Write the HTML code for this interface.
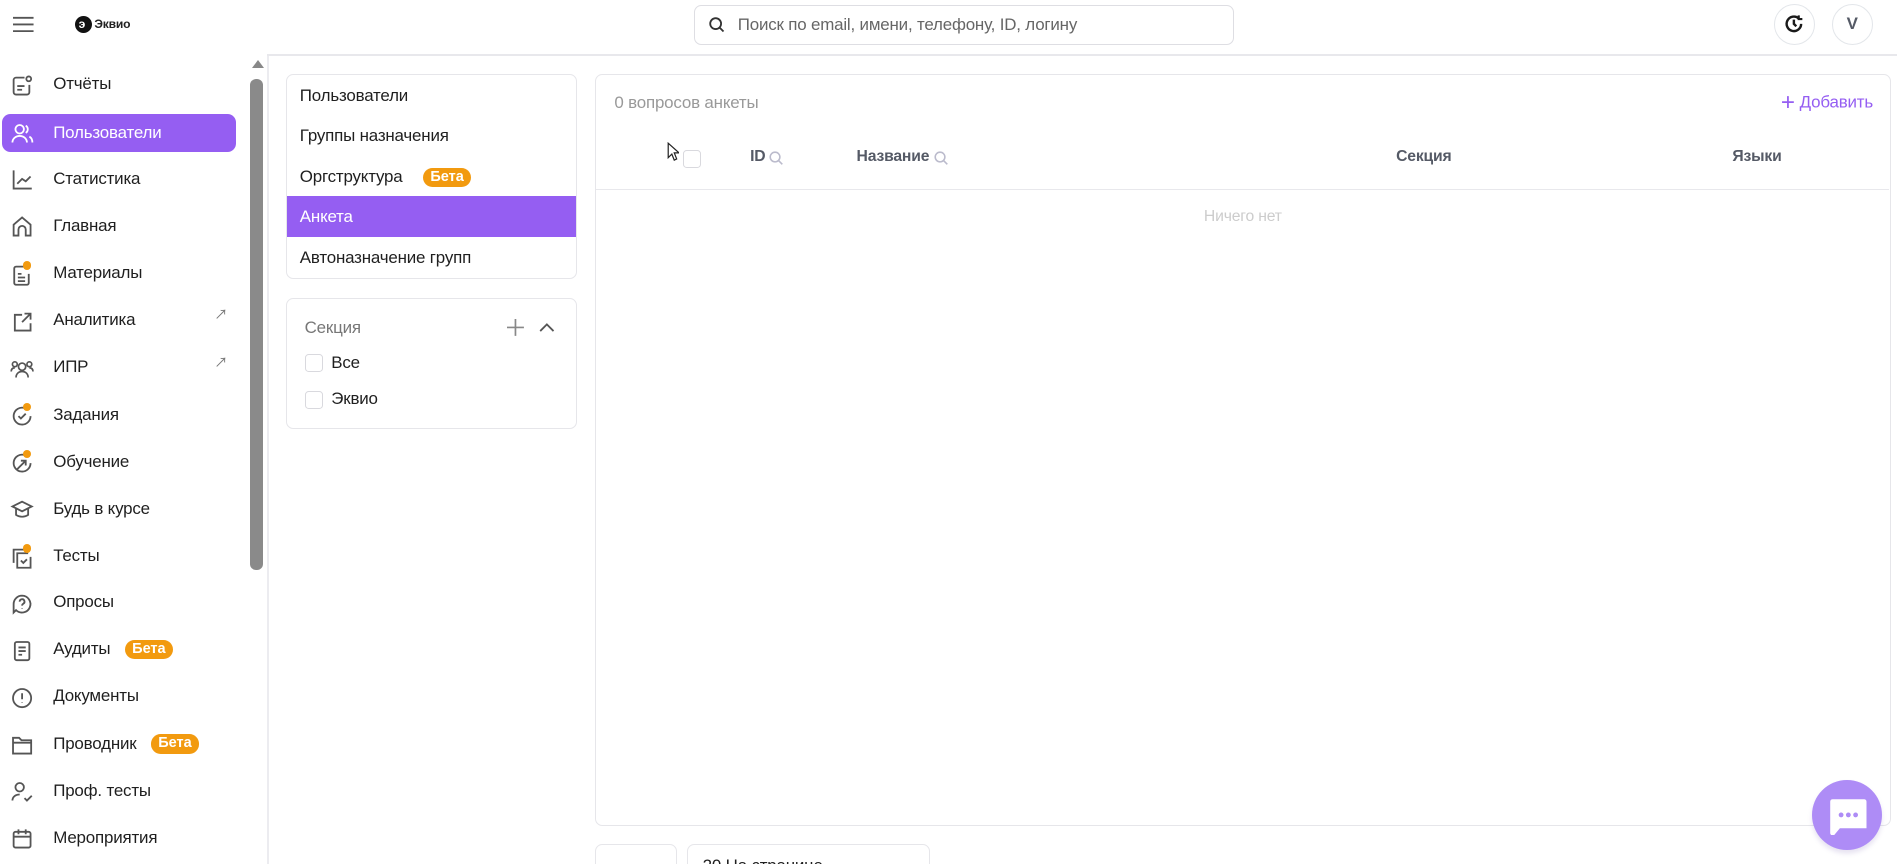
<!DOCTYPE html>
<html><head><meta charset="utf-8">
<style>
*{box-sizing:border-box;margin:0;padding:0}
html,body{width:1897px;height:864px;overflow:hidden;background:#fff}
#root{zoom:1.2098;width:1568px;height:714px;position:relative;font-family:"Liberation Sans","Noto Sans CJK SC",sans-serif;font-size:14px;letter-spacing:-0.15px;color:#1f1f1f;overflow:hidden}
.abs{position:absolute}
.hline{left:221px;top:45px;width:1347px;height:1px;background:#e8e8ec}
.vline{left:221px;top:46px;width:1px;height:668px;background:#ececf0}
.search{left:574px;top:4px;width:446px;height:33px;border:1px solid #dedee3;border-radius:6px;color:#666;font-size:14px;padding-left:35px;line-height:31px}
.circ{width:34px;height:34px;border:1px solid #e3e6ea;border-radius:50%;top:3px;text-align:center;line-height:32px;font-weight:bold;color:#555a66}
.mi{position:absolute;left:0;width:200px;height:32px;line-height:32px;padding-left:44px;font-size:14px}
.mi svg{position:absolute;left:8px;top:7px}
.mi.act{left:2px;width:193px;background:#955ef2;color:#fff;border-radius:7px;padding-left:42px}
.mi.act svg{left:6px}
.beta{display:inline-block;background:#f29a0f;color:#fff;font-weight:bold;font-size:12px;height:16px;line-height:16px;padding:0 6px;border-radius:8px;vertical-align:1px;margin-left:12px;letter-spacing:0}
.arr{position:absolute;right:12px;top:-4px;font-size:11px;color:#777}
.dot{position:absolute;width:7px;height:7px;background:#f29a0f;border-radius:50%}
.card{border:1px solid #e6e6ea;border-radius:6px;background:#fff}
.ci{position:absolute;left:0;width:239px;height:34px;line-height:34px;padding-left:11px}
.cb{position:absolute;width:15px;height:15px;border:1px solid #d9d9de;border-radius:3px;background:#fff}
.th{position:absolute;top:122px;font-weight:bold;color:#555a66;font-size:13px}
</style></head><body><div id="root">
<svg class="abs" style="left:11px;top:13px" width="17" height="14" viewBox="0 0 17 14"><path d="M0 1.5h17M0 7h17M0 12.5h17" stroke="#555" stroke-width="1.5"/></svg>
<div class="abs" style="left:62px;top:13px;width:14px;height:14px;border-radius:50%;background:#111"></div>
<div class="abs" style="left:65px;top:13px;color:#fff;font-size:10px;font-weight:bold;line-height:14px">э</div>
<div class="abs" style="left:78px;top:13px;font-size:10px;font-weight:bold;line-height:14px;color:#222">Эквио</div>
<div class="abs search">Поиск по email, имени, телефону, ID, логину</div>
<svg class="abs" style="left:586px;top:14px" width="13" height="13" viewBox="0 0 13 13"><circle cx="5.5" cy="5.5" r="4.5" stroke="#333" stroke-width="1.5" fill="none"/><path d="M9 9l3 3" stroke="#333" stroke-width="1.5"/></svg>
<div class="abs circ" style="left:1466px"><svg width="18" height="18" viewBox="0 0 18 18" style="margin-top:7px"><path d="M15 9a6 6 0 1 1-2-4.5" stroke="#1a1a1a" stroke-width="2" fill="none"/><path d="M9 5.5V9l2 2" stroke="#1a1a1a" stroke-width="2" fill="none"/><path d="M13 2v3h3" stroke="#1a1a1a" stroke-width="1.8" fill="none"/></svg></div>
<div class="abs circ" style="left:1514px">V</div>
<div class="abs hline"></div>
<div class="abs vline"></div>
<div class="abs" style="left:208px;top:50px;width:0;height:0;border-left:5px solid transparent;border-right:5px solid transparent;border-bottom:7px solid #888"></div>
<div class="abs" style="left:207px;top:65px;width:10px;height:406px;background:#8a8a8a;border-radius:5px"></div>
<div class="mi" style="top:54px"><svg width="20" height="20" viewBox="0 0 20 20" fill="none" stroke="#555" stroke-width="1.5"><path d="M12 3H5a2 2 0 0 0-2 2v10a2 2 0 0 0 2 2h9a2 2 0 0 0 2-2V9"/><circle cx="15.5" cy="4" r="2"/><path d="M6 10h6M6 13h4"/></svg>Отчёты</div>
<div class="mi act" style="top:94px"><svg width="20" height="20" viewBox="0 0 20 20" fill="none" stroke="#fff" stroke-width="1.5"><circle cx="8" cy="6" r="3.5"/><path d="M2 17c0-3.5 3-5.5 6-5.5s6 2 6 5.5M13 3a3.5 3.5 0 0 1 0 6M16 12c1.5.8 2.5 2.5 2.5 5"/></svg>Пользователи</div>
<div class="mi" style="top:132px"><svg width="20" height="20" viewBox="0 0 20 20" fill="none" stroke="#555" stroke-width="1.5"><path d="M3 2v15h15M6 13l4-4 3 2 4-4"/></svg>Статистика</div>
<div class="mi" style="top:171px"><svg width="20" height="20" viewBox="0 0 20 20" fill="none" stroke="#555" stroke-width="1.5"><path d="M3 17V8l7-6 7 6v9h-4v-5a3 3 0 0 0-6 0v5z"/></svg>Главная</div>
<div class="mi" style="top:210px"><svg width="20" height="20" viewBox="0 0 20 20" fill="none" stroke="#555" stroke-width="1.5"><path d="M12 3H5a1.5 1.5 0 0 0-1.5 1.5v12A1.5 1.5 0 0 0 5 18h9a1.5 1.5 0 0 0 1.5-1.5V9M6.5 9h3M6.5 12h6M6.5 15h6"/></svg><span class="dot" style="left:19px;top:6px"></span>Материалы</div>
<div class="mi" style="top:249px"><svg width="20" height="20" viewBox="0 0 20 20" fill="none" stroke="#555" stroke-width="1.5"><path d="M10 4H4v13h13v-6M12 3h5v5M17 3l-7 7"/></svg>Аналитика<span class="arr">↗</span></div>
<div class="mi" style="top:288px"><svg width="20" height="20" viewBox="0 0 20 20" fill="none" stroke="#555" stroke-width="1.4"><circle cx="10" cy="8" r="3"/><path d="M5 17c0-3 2-5 5-5s5 2 5 5"/><circle cx="4" cy="6" r="2"/><circle cx="16" cy="6" r="2"/><path d="M1 12c0-2 1-3 3-3M19 12c0-2-1-3-3-3"/></svg>ИПР<span class="arr">↗</span></div>
<div class="mi" style="top:327px"><svg width="20" height="20" viewBox="0 0 20 20" fill="none" stroke="#555" stroke-width="1.5"><path d="M17 10a7 7 0 1 1-5-6.7"/><path d="M7 10l2 2 4-4"/></svg><span class="dot" style="left:19px;top:6px"></span>Задания</div>
<div class="mi" style="top:366px"><svg width="20" height="20" viewBox="0 0 20 20" fill="none" stroke="#555" stroke-width="1.5"><path d="M17 10a7 7 0 1 1-5-6.7"/><path d="M6 15l7-7M9 8h4v4"/></svg><span class="dot" style="left:19px;top:6px"></span>Обучение</div>
<div class="mi" style="top:405px"><svg width="20" height="20" viewBox="0 0 20 20" fill="none" stroke="#555" stroke-width="1.5"><path d="M10 3l8 4-8 4-8-4z"/><path d="M5 9v5c3 2 7 2 10 0V9"/></svg>Будь в курсе</div>
<div class="mi" style="top:444px"><svg width="20" height="20" viewBox="0 0 20 20" fill="none" stroke="#555" stroke-width="1.5"><path d="M13 3H3v11"/><path d="M15 6H6v12h11V9"/><path d="M9 12l2 2 3-3"/></svg><span class="dot" style="left:19px;top:6px"></span>Тесты</div>
<div class="mi" style="top:482px"><svg width="20" height="20" viewBox="0 0 20 20" fill="none" stroke="#555" stroke-width="1.5"><path d="M10 3a7 7 0 1 1-5 12l-2 2V10a7 7 0 0 1 7-7z"/><path d="M8 8a2 2 0 1 1 3 1.7c-.7.4-1 .8-1 1.6M10 13.5v.5"/></svg>Опросы</div>
<div class="mi" style="top:521px"><svg width="20" height="20" viewBox="0 0 20 20" fill="none" stroke="#555" stroke-width="1.5"><rect x="4" y="2.5" width="12" height="15" rx="1.5"/><path d="M7 7h6M7 10h6M7 13h3"/></svg>Аудиты<span class="beta">Бета</span></div>
<div class="mi" style="top:560px"><svg width="20" height="20" viewBox="0 0 20 20" fill="none" stroke="#555" stroke-width="1.5"><circle cx="10" cy="10" r="7.5"/><path d="M10 6v5M10 13.5v.5"/></svg>Документы</div>
<div class="mi" style="top:599px"><svg width="20" height="20" viewBox="0 0 20 20" fill="none" stroke="#555" stroke-width="1.5"><path d="M2.5 4h5l2 2h8v11h-15z"/><path d="M2.5 8h15"/></svg>Проводник<span class="beta">Бета</span></div>
<div class="mi" style="top:638px"><svg width="20" height="20" viewBox="0 0 20 20" fill="none" stroke="#555" stroke-width="1.5"><circle cx="8" cy="6" r="3.5"/><path d="M2 17c0-3 2.5-5 6-5M12 15l2 2 4-4"/></svg>Проф. тесты</div>
<div class="mi" style="top:677px"><svg width="20" height="20" viewBox="0 0 20 20" fill="none" stroke="#555" stroke-width="1.5"><rect x="3" y="4" width="14" height="13" rx="1.5"/><path d="M3 8h14M7 2v4M13 2v4"/></svg>Мероприятия</div>
<div class="abs card" style="left:236px;top:61px;width:241px;height:170px;overflow:hidden">
 <div class="ci" style="top:0">Пользователи</div>
 <div class="ci" style="top:33px">Группы назначения</div>
 <div class="ci" style="top:67px">Оргструктура<span class="beta" style="margin-left:17px">Бета</span></div>
 <div class="ci" style="top:100px;background:#955ef2;color:#fff">Анкета</div>
 <div class="ci" style="top:134px">Автоназначение групп</div>
</div>
<div class="abs card" style="left:236px;top:246px;width:241px;height:109px">
 <div class="abs" style="left:15px;top:16px;color:#777">Секция</div>
 <svg class="abs" style="left:182px;top:17px" width="14" height="14" viewBox="0 0 14 14"><path d="M7 0v14M0 7h14" stroke="#888" stroke-width="1.4"/></svg>
 <svg class="abs" style="left:209px;top:19px" width="13" height="9" viewBox="0 0 13 9"><path d="M1 7.5l5.5-5.5 5.5 5.5" stroke="#555" stroke-width="1.5" fill="none"/></svg>
 <div class="cb" style="left:15px;top:46px"></div><div class="abs" style="left:37px;top:45px">Все</div>
 <div class="cb" style="left:15px;top:76px"></div><div class="abs" style="left:37px;top:75px">Эквио</div>
</div>
<div class="abs card" style="left:492px;top:61px;width:1071px;height:622px">
 <div class="abs" style="left:15px;top:15px;color:#999">0 вопросов анкеты</div>
 <div class="abs" style="right:14px;top:12px;color:#955ef2;font-size:14px"><span style="font-size:20px;vertical-align:-2px;margin-right:4px">+</span>Добавить</div>
 <div class="cb" style="left:72px;top:62px"></div>
 <div class="abs" style="left:0;top:94px;width:1069px;height:1px;background:#e8e8ec"></div>
 <div class="abs" style="left:0;top:110px;width:1069px;text-align:center;color:#ccc;font-size:13px">Ничего нет</div>
</div>
<div class="th" style="left:620px">ID</div>
<svg class="abs" style="left:636px;top:125px" width="12" height="12" viewBox="0 0 12 12"><circle cx="5" cy="5" r="4" stroke="#bbc" stroke-width="1.3" fill="none"/><path d="M8 8l3 3" stroke="#bbc" stroke-width="1.3"/></svg>
<div class="th" style="left:708px">Название</div>
<svg class="abs" style="left:772px;top:125px" width="12" height="12" viewBox="0 0 12 12"><circle cx="5" cy="5" r="4" stroke="#bbc" stroke-width="1.3" fill="none"/><path d="M8 8l3 3" stroke="#bbc" stroke-width="1.3"/></svg>
<div class="th" style="left:1154px">Секция</div>
<div class="th" style="left:1432px">Языки</div>
<svg class="abs" style="left:551px;top:117px" width="10" height="16" viewBox="0 0 10 16"><path d="M1 1v12l3-3 2 5 2-1-2-5h4z" fill="#fff" stroke="#222" stroke-width="1"/></svg>
<div class="abs card" style="left:492px;top:698px;width:68px;height:40px"></div>
<div class="abs card" style="left:568px;top:698px;width:201px;height:40px"><div class="abs" style="left:12px;top:9px">20 На странице</div></div>
<div class="abs" style="left:1498px;top:645px;width:58px;height:58px;border-radius:50%;background:#ae8cf6;box-shadow:0 3px 4px rgba(120,100,180,.18)"></div>
<svg class="abs" style="left:1512px;top:660px" width="32" height="30" viewBox="0 0 32 30"><path d="M3 1h26a2 2 0 0 1 2 2v22H9l-5 6H3a2 2 0 0 1-2-2V3a2 2 0 0 1 2-2z" fill="#fff"/><circle cx="10" cy="14" r="2" fill="#ae8cf6"/><circle cx="16" cy="14" r="2" fill="#ae8cf6"/><circle cx="22" cy="14" r="2" fill="#ae8cf6"/></svg>
</div></body></html>
